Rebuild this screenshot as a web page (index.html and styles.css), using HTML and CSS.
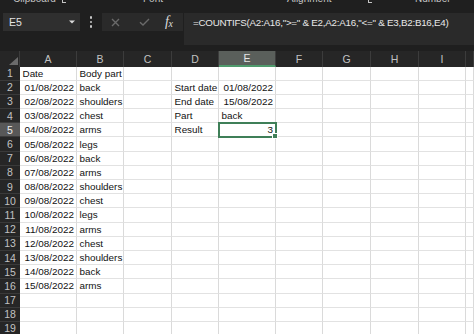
FILE: index.html
```html
<!DOCTYPE html>
<html>
<head>
<meta charset="utf-8">
<link rel="stylesheet" href="styles.css">
</head>
<body>
<div class="ribbon">
  <span class="grp g-clip">Clipboard</span><span class="launch l1"></span>
  <span class="grp g-font">Font</span>
  <span class="grp g-align">Alignment</span><span class="launch l2"></span>
  <span class="grp g-num">Number</span>
</div>
<div class="fbar">
  <div class="namebox"><span>E5</span><svg width="6" height="4" viewBox="0 0 6 4"><path d="M0 0.5h6L3 3.5z" fill="#dcdcdc"/></svg></div>
  <div class="grip"><i></i><i></i><i></i></div>
  <div class="fxbox">
    <svg class="ic-x" width="9" height="9" viewBox="0 0 9 9"><path d="M1 1L8 8M8 1L1 8" stroke="#6a6a6a" stroke-width="1.4" fill="none"/></svg>
    <svg class="ic-ok" width="11" height="8" viewBox="0 0 11 8"><path d="M1 4.2L4 7L10 1" stroke="#6a6a6a" stroke-width="1.4" fill="none"/></svg>
    <span class="fx"><span class="fx-f">f</span><span class="fx-x">x</span></span>
  </div>
  <div class="formula">=COUNTIFS(A2:A16,"&gt;=" &amp; E2,A2:A16,"&lt;=" &amp; E3,B2:B16,E4)</div>
</div>
<div class="sheet">
  <div class="row hdr">
    <div class="ch corner"></div><div class="ch">A</div><div class="ch">B</div><div class="ch">C</div><div class="ch">D</div><div class="ch on">E</div><div class="ch">F</div><div class="ch">G</div><div class="ch">H</div><div class="ch">I</div><div class="ch"></div>
  </div>
  <div class="row"><div class="rh">1</div><div class="c">Date</div><div class="c">Body part</div><div class="c"></div><div class="c"></div><div class="c"></div><div class="c"></div><div class="c"></div><div class="c"></div><div class="c"></div><div class="c"></div></div>
  <div class="row"><div class="rh">2</div><div class="c n">01/08/2022</div><div class="c">back</div><div class="c"></div><div class="c">Start date</div><div class="c n">01/08/2022</div><div class="c"></div><div class="c"></div><div class="c"></div><div class="c"></div><div class="c"></div></div>
  <div class="row"><div class="rh">3</div><div class="c n">02/08/2022</div><div class="c">shoulders</div><div class="c"></div><div class="c">End date</div><div class="c n">15/08/2022</div><div class="c"></div><div class="c"></div><div class="c"></div><div class="c"></div><div class="c"></div></div>
  <div class="row"><div class="rh">4</div><div class="c n">03/08/2022</div><div class="c">chest</div><div class="c"></div><div class="c">Part</div><div class="c">back</div><div class="c"></div><div class="c"></div><div class="c"></div><div class="c"></div><div class="c"></div></div>
  <div class="row"><div class="rh on">5</div><div class="c n">04/08/2022</div><div class="c">arms</div><div class="c"></div><div class="c">Result</div><div class="c n sel">3</div><div class="c"></div><div class="c"></div><div class="c"></div><div class="c"></div><div class="c"></div></div>
  <div class="row"><div class="rh">6</div><div class="c n">05/08/2022</div><div class="c">legs</div><div class="c"></div><div class="c"></div><div class="c"></div><div class="c"></div><div class="c"></div><div class="c"></div><div class="c"></div><div class="c"></div></div>
  <div class="row"><div class="rh">7</div><div class="c n">06/08/2022</div><div class="c">back</div><div class="c"></div><div class="c"></div><div class="c"></div><div class="c"></div><div class="c"></div><div class="c"></div><div class="c"></div><div class="c"></div></div>
  <div class="row"><div class="rh">8</div><div class="c n">07/08/2022</div><div class="c">arms</div><div class="c"></div><div class="c"></div><div class="c"></div><div class="c"></div><div class="c"></div><div class="c"></div><div class="c"></div><div class="c"></div></div>
  <div class="row"><div class="rh">9</div><div class="c n">08/08/2022</div><div class="c">shoulders</div><div class="c"></div><div class="c"></div><div class="c"></div><div class="c"></div><div class="c"></div><div class="c"></div><div class="c"></div><div class="c"></div></div>
  <div class="row"><div class="rh">10</div><div class="c n">09/08/2022</div><div class="c">chest</div><div class="c"></div><div class="c"></div><div class="c"></div><div class="c"></div><div class="c"></div><div class="c"></div><div class="c"></div><div class="c"></div></div>
  <div class="row"><div class="rh">11</div><div class="c n">10/08/2022</div><div class="c">legs</div><div class="c"></div><div class="c"></div><div class="c"></div><div class="c"></div><div class="c"></div><div class="c"></div><div class="c"></div><div class="c"></div></div>
  <div class="row"><div class="rh">12</div><div class="c n">11/08/2022</div><div class="c">arms</div><div class="c"></div><div class="c"></div><div class="c"></div><div class="c"></div><div class="c"></div><div class="c"></div><div class="c"></div><div class="c"></div></div>
  <div class="row"><div class="rh">13</div><div class="c n">12/08/2022</div><div class="c">chest</div><div class="c"></div><div class="c"></div><div class="c"></div><div class="c"></div><div class="c"></div><div class="c"></div><div class="c"></div><div class="c"></div></div>
  <div class="row"><div class="rh">14</div><div class="c n">13/08/2022</div><div class="c">shoulders</div><div class="c"></div><div class="c"></div><div class="c"></div><div class="c"></div><div class="c"></div><div class="c"></div><div class="c"></div><div class="c"></div></div>
  <div class="row"><div class="rh">15</div><div class="c n">14/08/2022</div><div class="c">back</div><div class="c"></div><div class="c"></div><div class="c"></div><div class="c"></div><div class="c"></div><div class="c"></div><div class="c"></div><div class="c"></div></div>
  <div class="row"><div class="rh">16</div><div class="c n">15/08/2022</div><div class="c">arms</div><div class="c"></div><div class="c"></div><div class="c"></div><div class="c"></div><div class="c"></div><div class="c"></div><div class="c"></div><div class="c"></div></div>
  <div class="row"><div class="rh">17</div><div class="c"></div><div class="c"></div><div class="c"></div><div class="c"></div><div class="c"></div><div class="c"></div><div class="c"></div><div class="c"></div><div class="c"></div><div class="c"></div></div>
  <div class="row"><div class="rh">18</div><div class="c"></div><div class="c"></div><div class="c"></div><div class="c"></div><div class="c"></div><div class="c"></div><div class="c"></div><div class="c"></div><div class="c"></div><div class="c"></div></div>
  <div class="row"><div class="rh">19</div><div class="c"></div><div class="c"></div><div class="c"></div><div class="c"></div><div class="c"></div><div class="c"></div><div class="c"></div><div class="c"></div><div class="c"></div><div class="c"></div></div>
</div>
</body>
</html>
```

FILE: styles.css
```css
* { box-sizing: border-box; margin: 0; padding: 0; }
html, body { width: 474px; height: 334px; overflow: hidden; background: #1f1f1f; }
body { font-family: "Liberation Sans", Arial, sans-serif; }

.ribbon { height: 5px; overflow: hidden; display: flex; align-items: flex-start; color: #c4c4c4; font-size: 10px; line-height: 10px; }
.grp { flex: none; margin-top: -6px; white-space: nowrap; }
.g-clip { margin-left: 13px; width: 49px; }
.launch { flex: none; width: 4px; height: 3px; border-left: 1px solid #c4c4c4; border-bottom: 1px solid #c4c4c4; }
.l1 { margin-right: 77px; }
.g-font { width: 144px; }
.g-align { width: 81px; }
.l2 { margin-right: 43px; }

.fbar { display: flex; align-items: flex-start; margin-top: 8px; height: 32px; }
.namebox { flex: none; margin-left: 3px; width: 77px; height: 18px; background: #2f2f2f; display: flex; align-items: center; padding: 0 5px 0 6px; color: #e4e4e4; font-size: 10.5px; }
.namebox svg { margin-left: auto; }
.grip { flex: none; width: 22px; height: 18px; display: flex; flex-direction: column; align-items: center; justify-content: center; gap: 2px; }
.grip i { display: block; width: 2.5px; height: 2.5px; border-radius: 50%; background: #c8c8c8; }
.fxbox { flex: none; width: 81px; height: 18px; background: #2a2a2a; display: flex; align-items: center; }
.ic-x { margin-left: 9px; }
.ic-ok { margin-left: 19px; }
.fx { margin-left: 15px; color: #dcdcdc; font-family: "Liberation Serif", "Times New Roman", serif; font-style: italic; display: flex; align-items: baseline; }
.fx-f { font-size: 14px; line-height: 14px; }
.fx-x { font-size: 10px; line-height: 10px; margin-left: -0.5px; position: relative; top: 1px; }
.formula { flex: 1; height: 32px; margin-left: 1px; background: #2a2a2a; padding: 3px 0 0 9px; color: #e8e8e8; font-size: 9.8px; line-height: 14px; letter-spacing: -0.25px; white-space: nowrap; overflow: hidden; }

.sheet { margin-top: 6px; }
.row { display: grid; grid-template-columns: 20px 57px 47px 48px 47px 57px 47px 48px 48px 47px 1fr; height: 14.2px; }
.hdr { height: 15.5px; background: #262626; }
.ch { color: #c2c2c2; font-size: 10.5px; display: flex; align-items: center; justify-content: center; border-right: 1px solid #3c3c3c; }
.ch.on { background: #5a5f5b; border-bottom: 2px solid #4f9a6c; color: #e6e6e6; }
.corner { position: relative; }
.corner::after { content: ""; position: absolute; right: 1px; bottom: 2px; border-style: solid; border-width: 0 0 8px 9px; border-color: transparent transparent #6b6b6b transparent; }
.rh { background: #262626; color: #c2c2c2; font-size: 10.5px; display: flex; align-items: center; justify-content: center; border-bottom: 1px solid #3a3a3a; }
.rh.on { background: #585858; color: #ededed; }
.c { background: #fff; border-right: 1px solid #dadada; border-bottom: 1px solid #e2e2e2; font-size: 9.9px; color: #111; padding: 0 2px 0 2.5px; display: flex; align-items: center; white-space: nowrap; }
.n { justify-content: flex-end; }
.sel { position: relative; z-index: 1; outline: 2px solid #3f7f58; outline-offset: -1px; }
.sel::after { content: ""; position: absolute; right: -3px; bottom: -3px; width: 4px; height: 4px; background: #3f7f58; border: 1px solid #fff; }
```
